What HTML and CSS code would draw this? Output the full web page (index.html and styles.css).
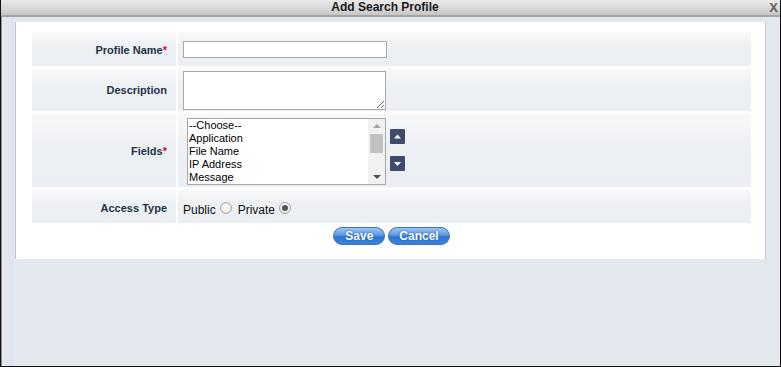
FILE: index.html
```html
<!DOCTYPE html>
<html>
<head>
<meta charset="utf-8">
<link rel="stylesheet" href="styles.css">
</head>
<body>
<div class="dialog">
  <div class="titlebar">
    <span class="title">Add Search Profile</span>
    <span class="close">X</span>
  </div>
  <div class="content">
    <div class="panel">
      <div class="form">
        <div class="label r1">Profile Name<span class="req">*</span></div>
        <div class="value r1"><input class="text" type="text"></div>
        <div class="label r2">Description</div>
        <div class="value r2"><textarea class="area"></textarea></div>
        <div class="label r3">Fields<span class="req">*</span></div>
        <div class="value r3">
          <div class="listbox">
            <div class="options">
              <div>--Choose--</div>
              <div>Application</div>
              <div>File Name</div>
              <div>IP Address</div>
              <div>Message</div>
            </div>
            <div class="scroll">
              <span class="arr up"></span>
              <span class="thumb"></span>
              <span class="arr down"></span>
            </div>
          </div>
          <div class="movers">
            <span class="mv"><svg width="15" height="15" viewBox="0 0 15 15"><path d="M4 9.5 L7.5 5.5 L11 9.5 Z" fill="#fff"/></svg></span>
            <span class="mv"><svg width="15" height="15" viewBox="0 0 15 15"><path d="M4 6 L7.5 10 L11 6 Z" fill="#fff"/></svg></span>
          </div>
        </div>
        <div class="label r4">Access Type</div>
        <div class="value r4 radios">
          <span class="opt">Public</span><span class="radio"></span>
          <span class="opt second">Private</span><span class="radio on"></span>
        </div>
      </div>
      <div class="actions">
        <button class="btn save">Save</button>
        <button class="btn">Cancel</button>
      </div>
    </div>
  </div>
</div>
</body>
</html>
```
FILE: styles.css
```css
html, body {
  margin: 0;
  padding: 0;
}
body {
  width: 781px;
  height: 367px;
  font-family: "Liberation Sans", Arial, sans-serif;
  background: #e3e8ef;
}
.dialog {
  box-sizing: border-box;
  width: 781px;
  height: 367px;
  border-left: 1px solid #111;
  border-right: 1px solid #111;
  border-bottom: 1px solid #111;
  display: flex;
  flex-direction: column;
  background: #e3e8ef;
}
.titlebar {
  height: 15px;
  flex: none;
  position: relative;
  display: flex;
  justify-content: center;
  align-items: center;
  background: linear-gradient(#eaeaea, #d6d6d6 60%, #c6c6c6);
  border-bottom: 2px solid #a4a4a4;
}
.title {
  font-weight: bold;
  font-size: 12px;
  color: #1a1a1a;
  line-height: 15px;
  margin-right: 11px;
}
.close {
  position: absolute;
  right: 2px;
  top: 1px;
  font-weight: bold;
  font-size: 13px;
  line-height: 13px;
  color: #5f5f5f;
}
.content {
  flex: 1;
  display: flex;
  align-items: flex-start;
  padding: 5px 0 0 1px;
  border-left: 1px solid #8e8e8e;
  background: linear-gradient(90deg, #e6eaef, #dfe4ea 11px, #e3e8ef 12px);
}
.panel {
  margin-left: 12px;
  height: 237px;
  background: #fff;
  border-left: 1px solid #bfc4ca;
  border-right: 1px solid #c5cad0;
  padding: 11px 14px 0 16px;
  box-sizing: border-box;
  width: 751px;
}
.form {
  display: grid;
  grid-template-columns: 144px 573px;
  grid-template-rows: 33px 42px 73px 33px;
  column-gap: 2px;
  row-gap: 3px;
}
.label, .value {
  background: linear-gradient(#f7f8fa, #eef1f4 40%, #ebeef2);
  display: flex;
  align-items: center;
}
.label {
  justify-content: flex-end;
  padding-right: 9px;
  font-weight: bold;
  font-size: 11px;
  color: #1e3446;
}
.label.r4 {
  padding-top: 2px;
  box-sizing: border-box;
}
.req {
  color: #e0003c;
}
.value {
  padding-left: 5px;
}
.text {
  box-sizing: border-box;
  width: 204px;
  height: 17px;
  border: 1px solid #a8a8a8;
  margin: 0;
  padding: 0;
  background: #fff;
}
.area {
  box-sizing: border-box;
  width: 203px;
  height: 39px;
  border: 1px solid #a8a8a8;
  margin: 0;
  padding: 0;
  resize: both;
  background: #fff;
}
.value.r3 {
  padding-left: 9px;
  align-items: flex-start;
  padding-top: 4px;
  box-sizing: border-box;
}
.listbox {
  box-sizing: border-box;
  width: 199px;
  height: 67px;
  border: 1px solid #a8a8a8;
  background: #fff;
  display: flex;
}
.options {
  flex: 1;
  font-size: 11px;
  line-height: 13px;
  color: #000;
  padding-left: 1px;
}
.scroll {
  width: 17px;
  background: #f1f1f1;
  display: flex;
  flex-direction: column;
  align-items: center;
}
.arr {
  width: 0;
  height: 0;
  border-left: 4px solid transparent;
  border-right: 4px solid transparent;
}
.arr.up {
  margin-top: 5px;
  border-bottom: 4px solid #a3a3a3;
}
.arr.down {
  margin-top: auto;
  margin-bottom: 5px;
  border-top: 4px solid #505050;
}
.thumb {
  margin-top: 6px;
  width: 13px;
  height: 19px;
  background: #c1c1c1;
}
.movers {
  margin-left: 4px;
  margin-top: 11px;
  display: flex;
  flex-direction: column;
  gap: 12px;
}
.mv {
  display: block;
  width: 15px;
  height: 15px;
  background: #3e4a6e;
  border-radius: 1px;
}
.mv svg {
  display: block;
}
.radios {
  font-size: 12px;
  color: #111;
  padding-top: 7px;
  box-sizing: border-box;
}
.opt.second {
  margin-left: 6px;
}
.radio {
  box-sizing: border-box;
  display: inline-block;
  width: 12px;
  height: 12px;
  border-radius: 50%;
  border: 1px solid #a9a9a9;
  background: radial-gradient(circle at 50% 40%, #fff, #dcdcdc);
  margin-left: 4px;
  margin-top: -5px;
  position: relative;
}
.radio.on::after {
  content: "";
  position: absolute;
  left: 2px;
  top: 2px;
  width: 6px;
  height: 6px;
  border-radius: 50%;
  background: #555;
}
.actions {
  display: flex;
  justify-content: center;
  gap: 3px;
  margin-top: 4px;
  padding-right: 0;
}
.btn {
  font-family: "Liberation Sans", Arial, sans-serif;
  font-weight: bold;
  font-size: 12px;
  color: #fff;
  text-shadow: 0 0 2px #1c4f95;
  height: 18px;
  padding: 0 10px;
  border: 1px solid #3a72c0;
  border-radius: 9px;
  background: linear-gradient(#9cc6f3, #5b9ae3 45%, #2f73d0 55%, #3b84dc);
  line-height: 16px;
  margin: 0;
}
.btn.save {
  padding: 0 11px;
}
```
